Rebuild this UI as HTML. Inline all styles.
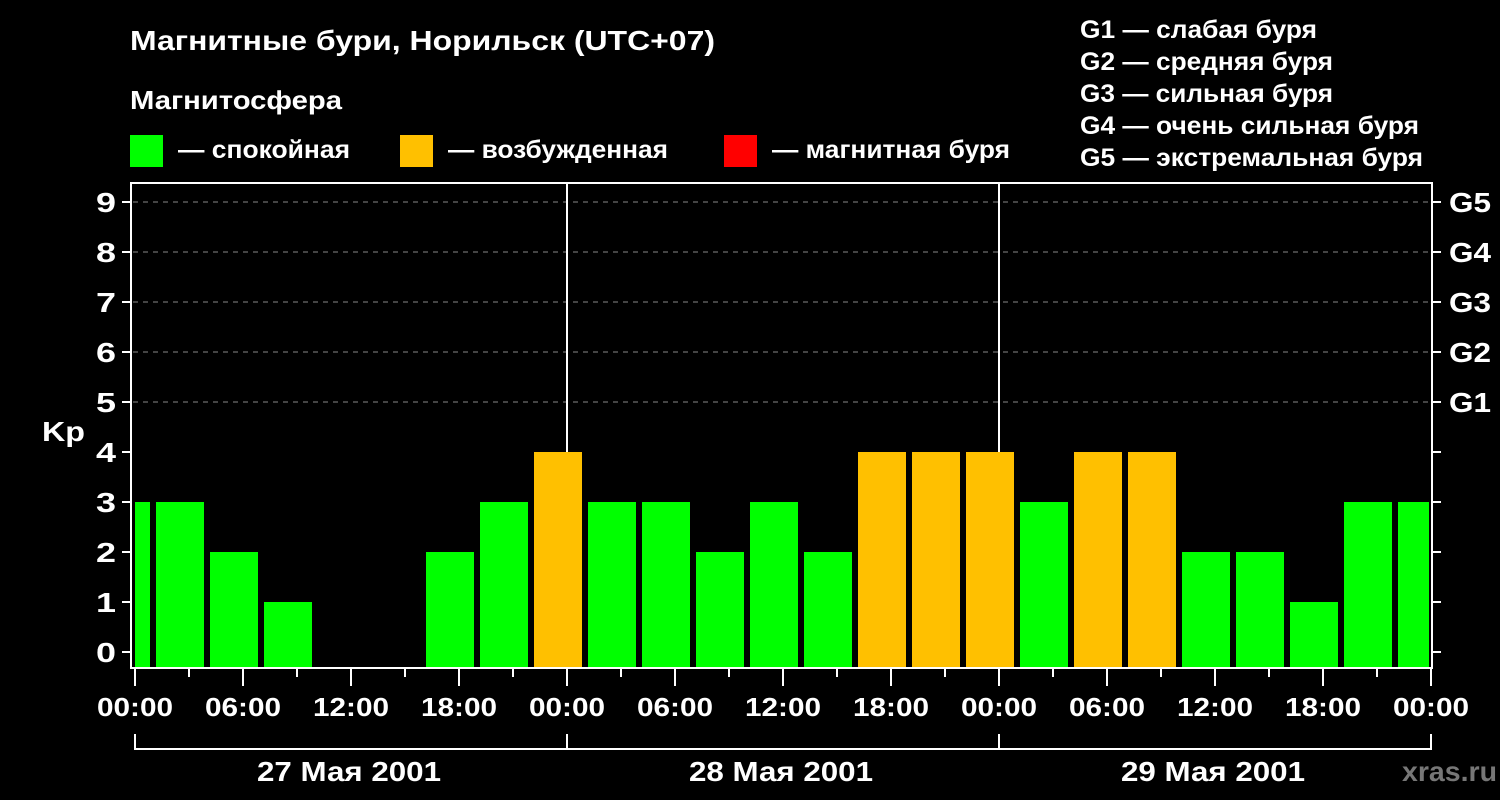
<!DOCTYPE html><html><head><style>body{margin:0;background:#000}svg{display:block}text{font-family:"Liberation Sans",sans-serif;font-weight:bold;fill:#fff}</style></head><body>
<svg width="1500" height="800" viewBox="0 0 1500 800">
<rect width="1500" height="800" fill="#000"/>
<text x="130" y="50" font-size="28" textLength="585" lengthAdjust="spacingAndGlyphs">Магнитные бури, Норильск (UTC+07)</text>
<text x="130" y="109" font-size="26" textLength="212" lengthAdjust="spacingAndGlyphs">Магнитосфера</text>
<rect x="130" y="135" width="33" height="32" fill="#00ff00"/><text x="178" y="158" font-size="25" textLength="172" lengthAdjust="spacingAndGlyphs">— спокойная</text>
<rect x="400" y="135" width="33" height="32" fill="#ffc000"/><text x="448" y="158" font-size="25" textLength="220" lengthAdjust="spacingAndGlyphs">— возбужденная</text>
<rect x="724" y="135" width="33" height="32" fill="#ff0000"/><text x="772" y="158" font-size="25" textLength="238" lengthAdjust="spacingAndGlyphs">— магнитная буря</text>
<g font-size="25"><text x="1080" y="38" textLength="237" lengthAdjust="spacingAndGlyphs">G1 — слабая буря</text><text x="1080" y="70" textLength="253" lengthAdjust="spacingAndGlyphs">G2 — средняя буря</text><text x="1080" y="102" textLength="253" lengthAdjust="spacingAndGlyphs">G3 — сильная буря</text><text x="1080" y="134" textLength="339" lengthAdjust="spacingAndGlyphs">G4 — очень сильная буря</text><text x="1080" y="166" textLength="343" lengthAdjust="spacingAndGlyphs">G5 — экстремальная буря</text></g>
<g stroke="#888" stroke-dasharray="5,5" stroke-width="1"><line x1="133" x2="1430" y1="202" y2="202"/><line x1="133" x2="1430" y1="252" y2="252"/><line x1="133" x2="1430" y1="302" y2="302"/><line x1="133" x2="1430" y1="352" y2="352"/><line x1="133" x2="1430" y1="402" y2="402"/></g>
<g stroke="#fff" stroke-width="2"><line x1="567" x2="567" y1="183" y2="668"/><line x1="999" x2="999" y1="183" y2="668"/></g>
<g id="bars"></g>
<g stroke="#fff" stroke-width="2" fill="none"><rect x="131" y="183" width="1301" height="485"/></g>
<g id="ticks" stroke="#fff" stroke-width="2"></g>
<g id="lab" font-size="27"></g>
<text x="42" y="441" font-size="28" textLength="43" lengthAdjust="spacingAndGlyphs">Kp</text>
<g font-size="28" text-anchor="middle"><text x="349" y="781" textLength="184" lengthAdjust="spacingAndGlyphs">27 Мая 2001</text><text x="781" y="781" textLength="184" lengthAdjust="spacingAndGlyphs">28 Мая 2001</text><text x="1213" y="781" textLength="184" lengthAdjust="spacingAndGlyphs">29 Мая 2001</text></g>
<text x="1402" y="781" font-size="28" textLength="95" lengthAdjust="spacingAndGlyphs" style="fill:#777">xras.ru</text>
<path d="M135 734V749H1431V734M567 734V749M999 734V749" stroke="#fff" stroke-width="2" fill="none"/>
</svg>
<script>
var ns="http://www.w3.org/2000/svg";
function el(p,t,a,txt){var e=document.createElementNS(ns,t);for(var k in a)e.setAttribute(k,a[k]);if(txt!=null)e.textContent=txt;document.getElementById(p).appendChild(e);}
var v=[3,3,2,1,0,0,2,3,4,3,3,2,3,2,4,4,4,3,4,4,2,2,1,3,3];
v.forEach(function(k,i){if(!k)return;var x0=99+54*i+3,x1=x0+48;x0=Math.max(x0,135);x1=Math.min(x1,1429);var top=652-50*k;el("bars","rect",{x:x0,y:top,width:x1-x0,height:668-top,fill:k>=4?"#ffc000":"#00ff00"});});
for(var i=0;i<=9;i++){var y=652-50*i;el("ticks","line",{x1:122,x2:131,y1:y,y2:y});el("ticks","line",{x1:1432,x2:1441,y1:y,y2:y});el("lab","text",{x:96,y:y+10,"font-size":28,textLength:20,lengthAdjust:"spacingAndGlyphs"},String(i));}
["G1","G2","G3","G4","G5"].forEach(function(g,j){el("lab","text",{x:1449,y:402-50*j+10,"font-size":28,textLength:42,lengthAdjust:"spacingAndGlyphs"},g);});
var labs=["00:00","06:00","12:00","18:00"];
for(var h=0;h<=72;h+=3){var x=135+18*h;var maj=h%6==0;el("ticks","line",{x1:x,x2:x,y1:668,y2:maj?686:677});if(maj)el("lab","text",{x:x,y:716,"text-anchor":"middle","font-size":26,textLength:76,lengthAdjust:"spacingAndGlyphs"},labs[(h/6)%4]);}
</script>
</body></html>
